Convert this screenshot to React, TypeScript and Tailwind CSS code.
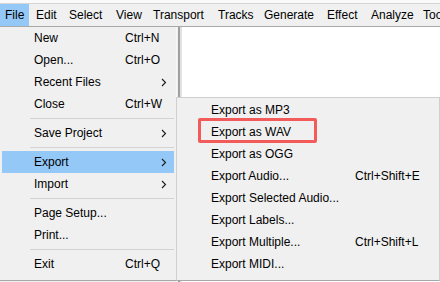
import React from "react";

const Chevron = () => (
  <svg width="6" height="9" viewBox="0 0 6 9" className="block">
    <polyline points="1,1 4.5,4.5 1,8" fill="none" stroke="#1a1a1a" strokeWidth="1.1" />
  </svg>
);

type FileItem =
  | { sep: true }
  | { label: string; shortcut?: string; arrow?: boolean; active?: boolean };

const fileItems: FileItem[] = [
  { label: "New", shortcut: "Ctrl+N" },
  { label: "Open...", shortcut: "Ctrl+O" },
  { label: "Recent Files", arrow: true },
  { label: "Close", shortcut: "Ctrl+W" },
  { sep: true },
  { label: "Save Project", arrow: true },
  { sep: true },
  { label: "Export", arrow: true, active: true },
  { label: "Import", arrow: true },
  { sep: true },
  { label: "Page Setup..." },
  { label: "Print..." },
  { sep: true },
  { label: "Exit", shortcut: "Ctrl+Q" },
];

const exportItems: { label: string; shortcut?: string }[] = [
  { label: "Export as MP3" },
  { label: "Export as WAV" },
  { label: "Export as OGG" },
  { label: "Export Audio...", shortcut: "Ctrl+Shift+E" },
  { label: "Export Selected Audio..." },
  { label: "Export Labels..." },
  { label: "Export Multiple...", shortcut: "Ctrl+Shift+L" },
  { label: "Export MIDI..." },
];

const barItems: { label: string; w: string }[] = [
  { label: "Edit", w: "w-[33px]" },
  { label: "Select", w: "w-[47px]" },
  { label: "View", w: "w-[37px]" },
  { label: "Transport", w: "w-[65px]" },
  { label: "Tracks", w: "w-[46px]" },
  { label: "Generate", w: "w-[63px]" },
  { label: "Effect", w: "w-[44px]" },
  { label: "Analyze", w: "w-[52px]" },
  { label: "Tools", w: "w-[50px]" },
];

export default function App() {
  return (
    <div
      className="relative w-[440px] h-[282px] overflow-hidden bg-[#f0f0f0] text-[12px] text-[#000] flex flex-col"
      style={{ fontFamily: '"Liberation Sans", Arial, sans-serif' }}
    >
      <div className="h-[3px] bg-[#fafafa] shrink-0" />
      <div className="h-[1px] bg-[#d4d4d4] shrink-0" />
      {/* Menu bar */}
      <div className="h-[22px] flex items-stretch leading-[22px] whitespace-nowrap shrink-0 overflow-hidden">
        <div className="w-[29px] shrink-0 pl-[5px] bg-[#94c8f6]">File</div>
        <div className="flex shrink-0 pl-[7px]">
          {barItems.map((b) => (
            <div key={b.label} className={`${b.w} shrink-0`}>
              {b.label}
            </div>
          ))}
        </div>
      </div>
      <div className="h-[1px] bg-[#a9a9a9] shrink-0" />
      {/* Content area */}
      <div className="flex flex-1">
        <div className="w-[178px] shrink-0" />
        <div className="w-[2px] bg-[#a0a0a0]" />
        <div className="w-[2px] bg-[#e2e2e2]" />
        <div className="flex-1 bg-white" />
      </div>

      {/* File menu */}
      <div className="absolute left-0 top-[27px] w-[177px] h-[254px] bg-[#f0f0f0] border-b border-[#a8a8a8] border-r border-r-[#f7f7f7] px-[2px] leading-[22px] whitespace-nowrap">
        {fileItems.map((it, i) =>
          "sep" in it ? (
            <div key={i} className="h-[7px] pt-[3px] pl-[28px]">
              <div className="h-[1px] bg-[#d3d3d3]" />
            </div>
          ) : (
            <div
              key={i}
              className={`h-[22px] flex items-center ${it.active ? "bg-[#94c8f6]" : ""}`}
            >
              <span className="w-[123px] pl-[32px] shrink-0">{it.label}</span>
              <span className="w-[36px] shrink-0">{it.shortcut ?? ""}</span>
              {it.arrow ? <Chevron /> : null}
            </div>
          )
        )}
      </div>

      {/* Export submenu */}
      <div className="absolute left-[176px] top-[97px] w-[264px] h-[184px] bg-[#f0f0f0] border border-[#cfcfcf] border-b-[#a8a8a8] pt-[1px] leading-[22px] whitespace-nowrap">
        {exportItems.map((it) => (
          <div key={it.label} className="h-[22px] flex">
            <span className="w-[178px] pl-[34px] shrink-0">{it.label}</span>
            <span>{it.shortcut ?? ""}</span>
          </div>
        ))}
        <div className="absolute left-[21px] top-[20px] w-[119px] h-[25px] border-[3px] border-[#f35a5a] rounded-[2px]" />
      </div>
    </div>
  );
}
